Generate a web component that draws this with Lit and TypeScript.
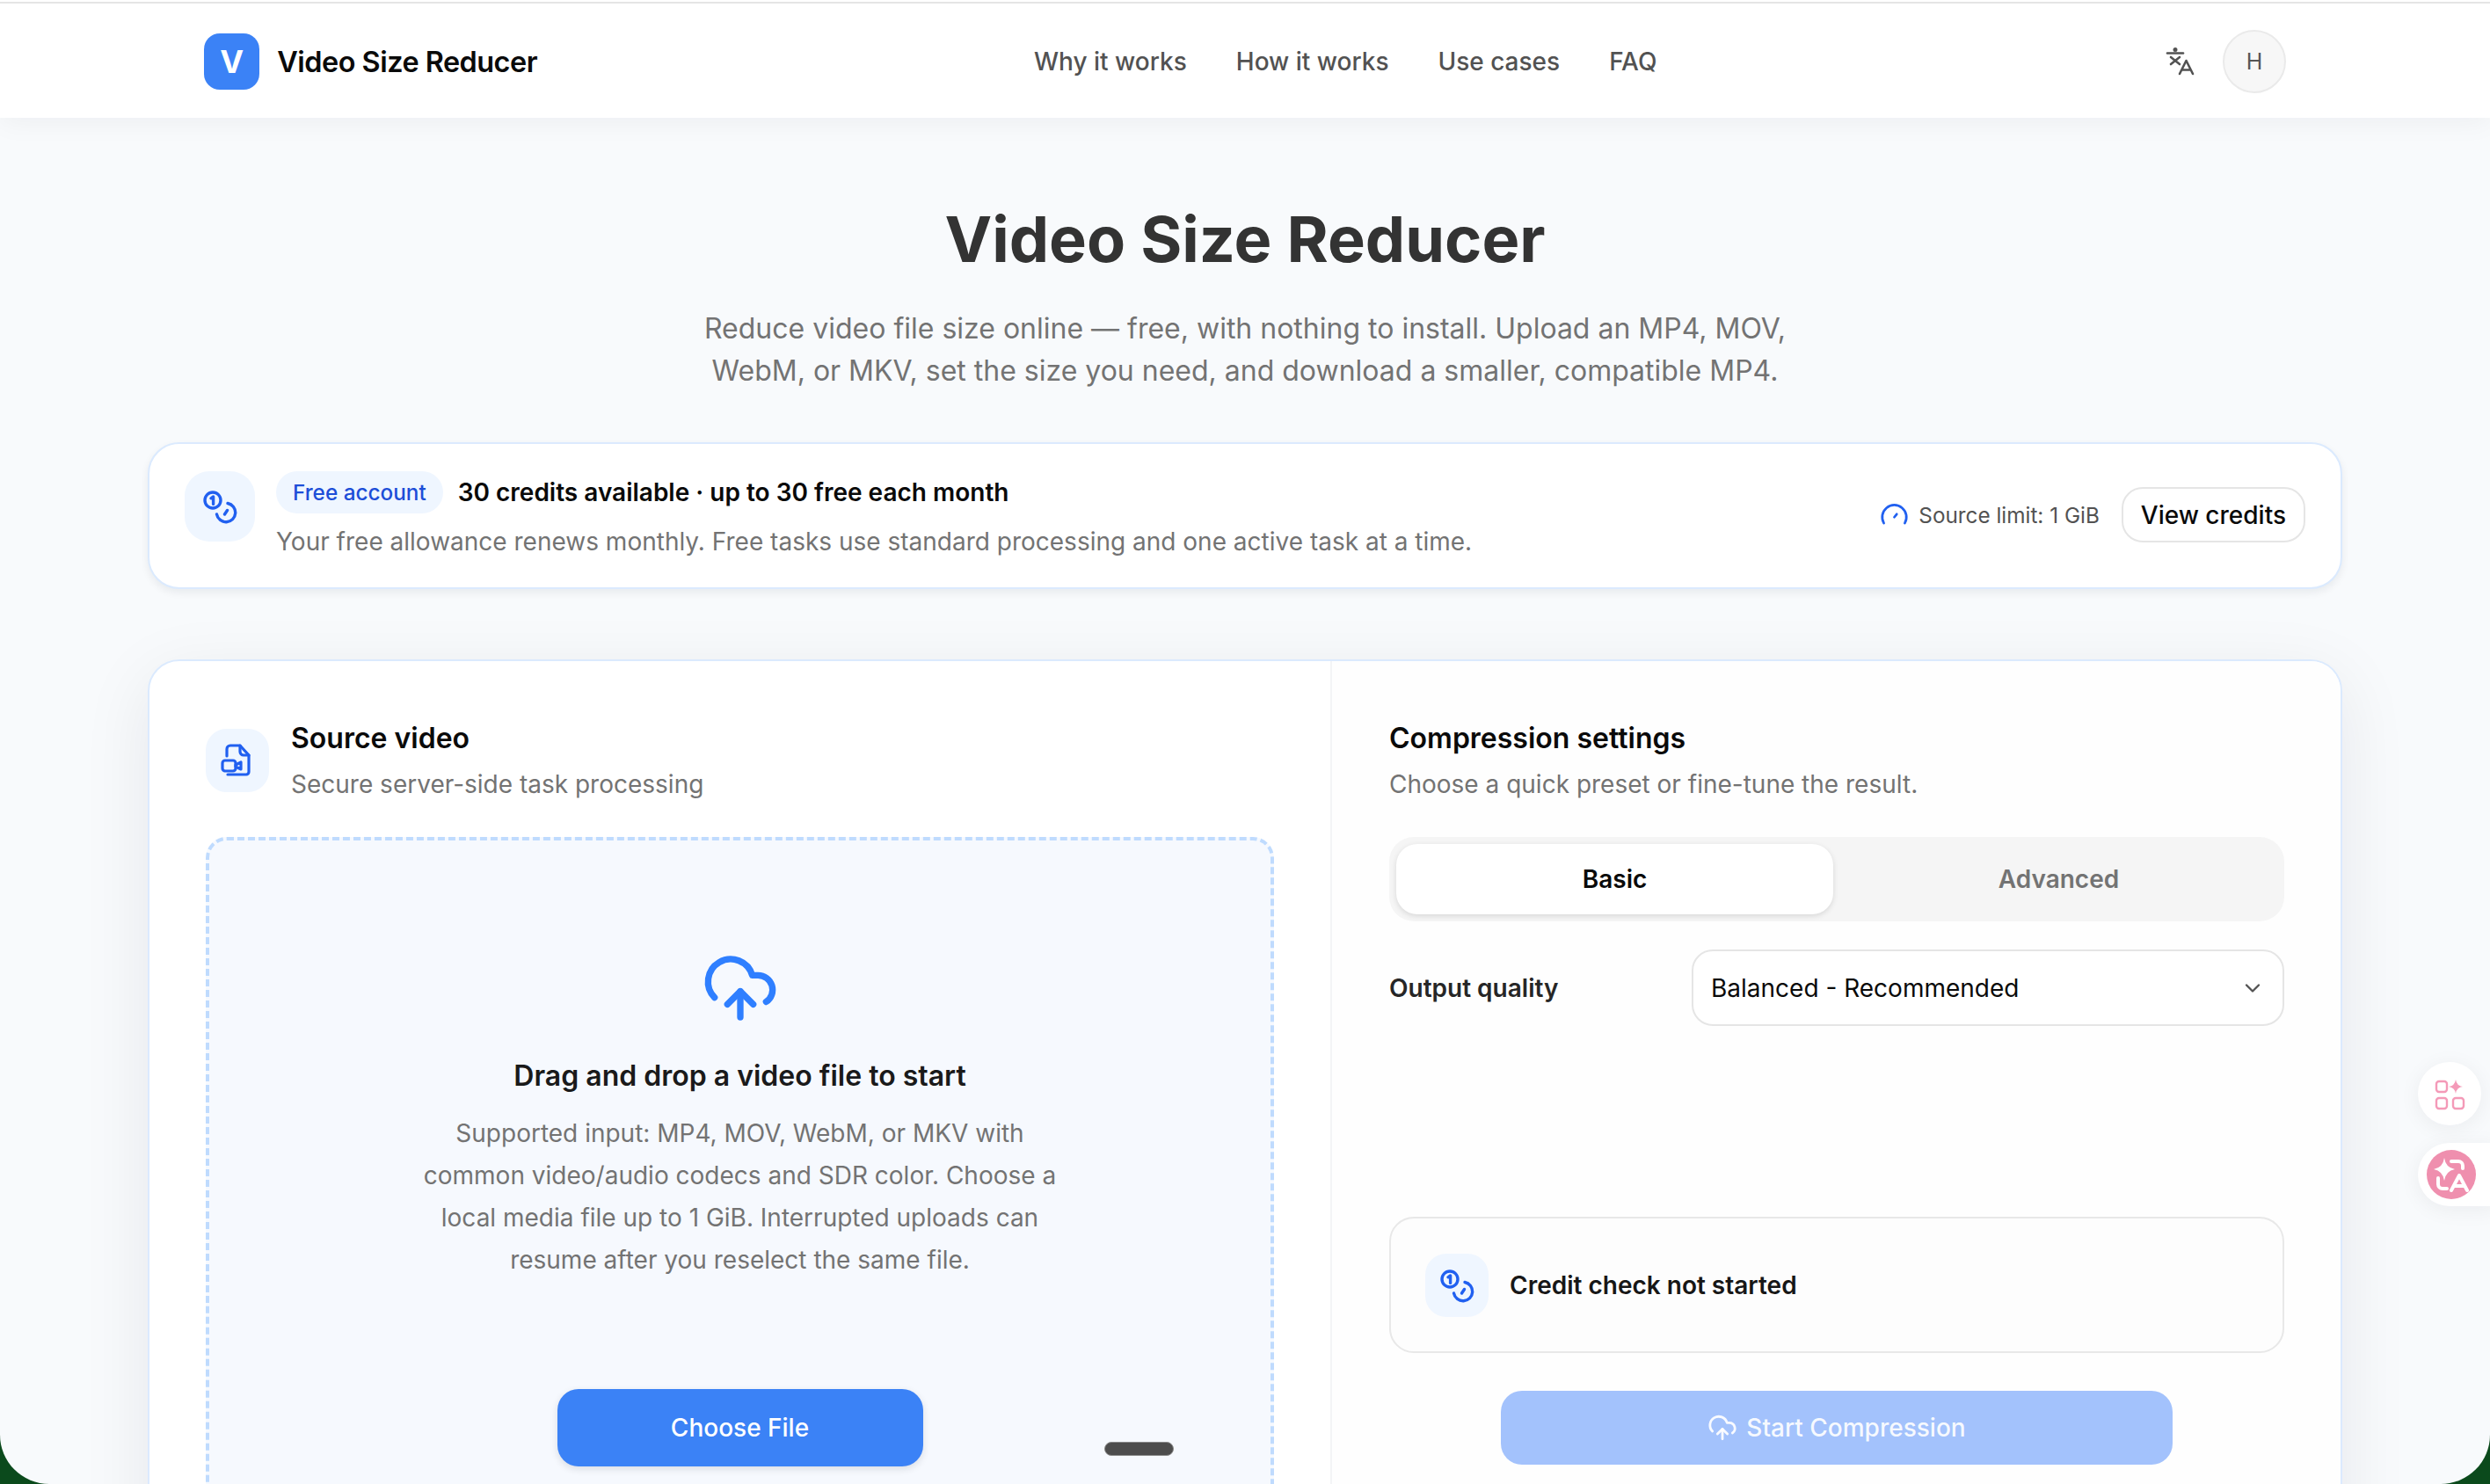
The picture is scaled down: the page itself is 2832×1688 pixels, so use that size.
import { LitElement, html, css } from "lit";
import { customElement } from "lit/decorators.js";

const coins = html`<svg class="ico40" viewBox="0 0 40 40" fill="none" stroke="currentColor" stroke-width="3.4" stroke-linecap="round" stroke-linejoin="round">
  <circle cx="12" cy="13" r="9"></circle>
  <path d="M10 10.8l2.6-1.8v8.4"></path>
  <path d="M29 16.5A10.7 10.7 0 1 1 16.5 29"></path>
  <path d="M25.5 29l3-4.5"></path>
</svg>`;

const fileVideo = html`<svg class="ico40" viewBox="0 0 40 40" fill="none" stroke="currentColor" stroke-width="3.2" stroke-linecap="round" stroke-linejoin="round">
  <path d="M8 15V7a4 4 0 0 1 4-4h11l10 11v19a3 3 0 0 1-3 3H9"></path>
  <path d="M23 3v7a4 4 0 0 0 4 4h6"></path>
  <rect x="3" y="20" width="15" height="12" rx="3"></rect>
  <path d="M18 25l6-3v8l-6-3z"></path>
</svg>`;

const cloudUpload = (cls: string) => html`<svg class=${cls} viewBox="0 0 24 24" fill="none" stroke="currentColor" stroke-width="2" stroke-linecap="round" stroke-linejoin="round">
  <path d="M12 13v8"></path>
  <path d="M4 14.899A7 7 0 1 1 15.71 8h1.79a4.5 4.5 0 0 1 2.5 8.242"></path>
  <path d="m8 17 4-4 4 4"></path>
</svg>`;

@customElement("app-root")
export class AppRoot extends LitElement {
  static styles = css`
    :host { display: block; width: 2832px; height: 1688px; background: #0b4a1c; overflow: hidden; font-family: Inter, "Noto Sans", sans-serif; position: relative; }
    * { box-sizing: border-box; }
    .page { height: 1688px; background: #f8fafc; border-radius: 0 0 56px 56px; overflow: hidden; position: relative; display: flex; flex-direction: column; }
    .top { background: #fff; padding-top: 2px; box-shadow: 0 4px 30px rgba(15,23,42,.05); position: relative; z-index: 2; flex: none; }
    .topline { height: 2px; background: #e5e5e5; }
    .nav { height: 130px; padding: 2px 232px 0; display: flex; align-items: center; }
    .brand { display: flex; align-items: center; gap: 20px; width: 379px; flex: none; }
    .logo { width: 64px; height: 64px; border-radius: 18px; background: #3b82f6; color: #fff; font-weight: 700; font-size: 36px; display: flex; align-items: center; justify-content: center; }
    .bname { font-size: 32.4px; font-weight: 600; color: #0a0a0a; letter-spacing: -0.5px; white-space: nowrap; }
    .links { margin-left: 565px; display: flex; gap: 56px; font-size: 28px; font-weight: 500; color: #525252; }
    .actions { margin-left: auto; display: flex; align-items: center; gap: 30px; }
    .lang { width: 36px; height: 36px; color: #525252; display: block; }
    .avatar { width: 72px; height: 72px; border-radius: 50%; background: #f7f7f7; border: 2px solid #eaeaea; color: #555; font-size: 25px; display: flex; align-items: center; justify-content: center; }

    .main { padding: 0 168px; flex: none; }
    h1 { margin: 94px 0 0; text-align: center; font-size: 72px; line-height: 88px; font-weight: 700; color: #333; }
    .lead { margin: 34px 0 0; text-align: center; font-size: 32px; line-height: 48px; color: #737373; }
    .banner { margin-top: 57px; height: 167px; background: #fff; border: 2px solid #dbeafe; border-radius: 36px; box-shadow: 0 4px 10px rgba(15,23,42,.07); padding: 0 40px 2px 40px; display: flex; align-items: center; }
    .tile { flex: none; background: #eff6ff; color: #2160f0; display: flex; align-items: center; justify-content: center; }
    .tile80 { width: 80px; height: 80px; border-radius: 28px; align-self: flex-start; margin-top: 31px; }
    .tile72 { width: 72px; height: 72px; border-radius: 24px; }
    .ico40 { width: 40px; height: 40px; display: block; }
    .bt { margin-left: 24px; flex: 1; align-self: flex-start; margin-top: 31px; }
    .row1 { display: flex; align-items: center; gap: 17px; height: 48px; }
    .pill { height: 48px; padding: 0 19px; border-radius: 24px; background: #eff6ff; color: #1d4ed8; font-size: 24.3px; font-weight: 500; display: flex; align-items: center; }
    .credits { font-size: 28px; font-weight: 600; color: #0a0a0a; }
    .row2 { margin-top: 12px; font-size: 28px; line-height: 40px; color: #737373; }
    .bside { display: flex; align-items: center; gap: 25px; }
    .limit { display: flex; align-items: center; gap: 11px; font-size: 24.3px; color: #525252; }
    .gauge { width: 33px; height: 33px; color: #2160f0; display: block; }
    .vc { height: 63px; padding: 0 20px; border: 2px solid #e5e5e5; border-radius: 24px; background: #fff; display: flex; align-items: center; font-size: 28px; font-weight: 500; color: #0a0a0a; }

    .card { margin-top: 80px; background: #fff; border: 2px solid #dbeafe; border-radius: 36px; box-shadow: 0 20px 80px rgba(15,23,42,.08); display: grid; grid-template-columns: 1343px 1fr; overflow: hidden; height: 1100px; }
    .left { padding: 66px 64px 0 64px; }
    .right { padding: 66px 64px 0 65px; border-left: 2px solid #f3f4f6; background: #fefefe; }
    .head { display: flex; align-items: center; gap: 25px; }
    .ht { font-size: 32px; line-height: 44px; font-weight: 600; color: #0a0a0a; }
    .hs { font-size: 28px; line-height: 40px; margin-top: 10px; color: #737373; }
    .drop { margin-top: 40px; height: 900px; background: #f6f9fe; border: 4px dashed #bfdbfe; border-radius: 24px; padding-top: 124px; display: flex; flex-direction: column; align-items: center; text-align: center; }
    .cloud { width: 88px; height: 88px; color: #2f7fff; display: block; }
    .dt { margin-top: 34px; font-size: 32px; line-height: 44px; font-weight: 600; color: #1a1a1a; }
    .dd { margin-top: 19px; font-size: 28px; line-height: 48px; color: #737373; }
    .choose { margin-top: 123px; width: 416px; height: 88px; border-radius: 24px; background: #3b82f6; color: #fff; font-size: 28px; font-weight: 500; display: flex; align-items: center; justify-content: center; box-shadow: 0 3px 8px rgba(15,23,42,.12); }

    .tabs { margin-top: 40px; height: 96px; border-radius: 28px; background: #f5f5f5; padding: 8px; display: grid; grid-template-columns: 1fr 1fr; gap: 8px; font-size: 28px; font-weight: 600; }
    .tab { display: flex; align-items: center; justify-content: center; border-radius: 24px; color: #737373; }
    .tab.on { background: #fff; color: #0a0a0a; box-shadow: 0 2px 6px rgba(0,0,0,.12); }
    .out { margin-top: 32px; display: flex; align-items: center; }
    .ol { width: 344px; font-size: 28px; font-weight: 600; color: #262626; }
    .sel { flex: 1; height: 87px; border: 2px solid #e5e5e5; border-radius: 24px; background: #fff; padding: 0 20px; display: flex; align-items: center; justify-content: space-between; font-size: 28px; color: #0a0a0a; }
    .chev { width: 28px; height: 28px; color: #525252; display: block; }
    .credit { margin-top: 217px; height: 155px; border: 2px solid #e8e8e8; border-radius: 28px; background: #fdfdfd; padding: 0 39px; display: flex; align-items: center; gap: 24px; font-size: 28px; font-weight: 600; color: #171717; }
    .start { margin: 43px auto 0; width: 764px; height: 84px; border-radius: 24px; background: #a3c2fc; color: rgba(255,255,255,.92); font-size: 28px; font-weight: 500; display: flex; align-items: center; justify-content: center; gap: 10px; }
    .cs { width: 34px; height: 34px; display: block; }

    .fab { position: absolute; left: 2750px; width: 72px; height: 72px; background: #fff; border-radius: 36px; box-shadow: 0 4px 24px rgba(15,23,42,.06); display: flex; align-items: center; justify-content: center; z-index: 3; }
    .fab.a { top: 1208px; }
    .fab.b { top: 1300px; width: 90px; justify-content: flex-start; padding-left: 10px; border-radius: 36px 0 0 36px; }
    .fabi { width: 40px; height: 40px; display: block; }
    .fabc { width: 56px; height: 56px; display: block; }
    .grab { position: absolute; left: 1256px; top: 1640px; width: 79px; height: 16px; border-radius: 8px; background: #4d4d4d; border: 1px solid #8a8a8a; z-index: 3; }
  `;

  render() {
    return html`
      <div class="page">
        <div class="top">
          <div class="topline"></div>
          <nav class="nav">
            <div class="brand"><div class="logo">V</div><div class="bname">Video Size Reducer</div></div>
            <div class="links"><span>Why it works</span><span>How it works</span><span>Use cases</span><span>FAQ</span></div>
            <div class="actions">
              <svg class="lang" viewBox="0 0 36 36" fill="none" stroke="currentColor" stroke-width="2.6" stroke-linecap="round" stroke-linejoin="round">
                <path d="M3 8.5H21"></path>
                <circle cx="12" cy="4.5" r="1.2" fill="currentColor"></circle>
                <path d="M7 13L17 21M17 13L7 21"></path>
                <path d="M17 32L24.5 17L32 32M19.5 27.5H29.5"></path>
              </svg>
              <div class="avatar">H</div>
            </div>
          </nav>
        </div>
        <div class="main">
          <h1>Video Size Reducer</h1>
          <p class="lead">Reduce video file size online — free, with nothing to install. Upload an MP4, MOV,<br>WebM, or MKV, set the size you need, and download a smaller, compatible MP4.</p>
          <section class="banner">
            <div class="tile tile80">${coins}</div>
            <div class="bt">
              <div class="row1"><span class="pill">Free account</span><span class="credits">30 credits available · up to 30 free each month</span></div>
              <div class="row2">Your free allowance renews monthly. Free tasks use standard processing and one active task at a time.</div>
            </div>
            <div class="bside">
              <div class="limit">
                <svg class="gauge" viewBox="0 0 24 24" fill="none" stroke="currentColor" stroke-width="2" stroke-linecap="round"><path d="M12 14l2-2.5"></path><path d="M3.34 19a10 10 0 1 1 17.32 0"></path></svg>
                <span>Source limit: 1 GiB</span>
              </div>
              <div class="vc">View credits</div>
            </div>
          </section>
          <section class="card">
            <div class="left">
              <div class="head">
                <div class="tile tile72">${fileVideo}</div>
                <div><div class="ht">Source video</div><div class="hs">Secure server-side task processing</div></div>
              </div>
              <div class="drop">
                ${cloudUpload("cloud")}
                <div class="dt">Drag and drop a video file to start</div>
                <div class="dd">Supported input: MP4, MOV, WebM, or MKV with<br>common video/audio codecs and SDR color. Choose a<br>local media file up to 1 GiB. Interrupted uploads can<br>resume after you reselect the same file.</div>
                <div class="choose">Choose File</div>
              </div>
            </div>
            <div class="right">
              <div class="ht">Compression settings</div>
              <div class="hs">Choose a quick preset or fine-tune the result.</div>
              <div class="tabs"><div class="tab on">Basic</div><div class="tab">Advanced</div></div>
              <div class="out">
                <div class="ol">Output quality</div>
                <div class="sel"><span>Balanced - Recommended</span>
                  <svg class="chev" viewBox="0 0 24 24" fill="none" stroke="currentColor" stroke-width="2" stroke-linecap="round" stroke-linejoin="round"><path d="m6 9 6 6 6-6"></path></svg>
                </div>
              </div>
              <div class="credit"><div class="tile tile72">${coins}</div><span>Credit check not started</span></div>
              <div class="start">${cloudUpload("cs")}<span>Start Compression</span></div>
            </div>
          </section>
        </div>
        <div class="fab a">
          <svg class="fabi" viewBox="0 0 40 40" fill="none" stroke="#f49ab8" stroke-width="2.4">
            <rect x="5" y="6" width="12" height="12" rx="3"></rect>
            <rect x="5" y="25" width="12" height="12" rx="3"></rect>
            <rect x="24" y="25" width="12" height="12" rx="3"></rect>
            <path d="M27 4Q28 11 35 12Q28 13 27 20Q26 13 19 12Q26 11 27 4Z" fill="#f49ab8" stroke="none"></path>
          </svg>
        </div>
        <div class="fab b">
          <svg class="fabc" viewBox="0 0 56 56" fill="none">
            <circle cx="28" cy="28" r="28" fill="#ef8fae"></circle>
            <path d="M20 9Q21.5 20 32 22Q21.5 24 20 35Q18.5 24 8 22Q18.5 20 20 9Z" fill="#fff"></path>
            <path d="M28 13h8a5 5 0 0 1 5 5v3" stroke="#fff" stroke-width="4" stroke-linecap="round"></path>
            <path d="M13 32v7a5 5 0 0 0 5 5h5" stroke="#fff" stroke-width="4" stroke-linecap="round"></path>
            <path d="M28 46L37 29L46 46M31.5 41H42.5" stroke="#fff" stroke-width="4" stroke-linecap="round" stroke-linejoin="round"></path>
          </svg>
        </div>
        <div class="grab"></div>
      </div>
    `;
  }
}
